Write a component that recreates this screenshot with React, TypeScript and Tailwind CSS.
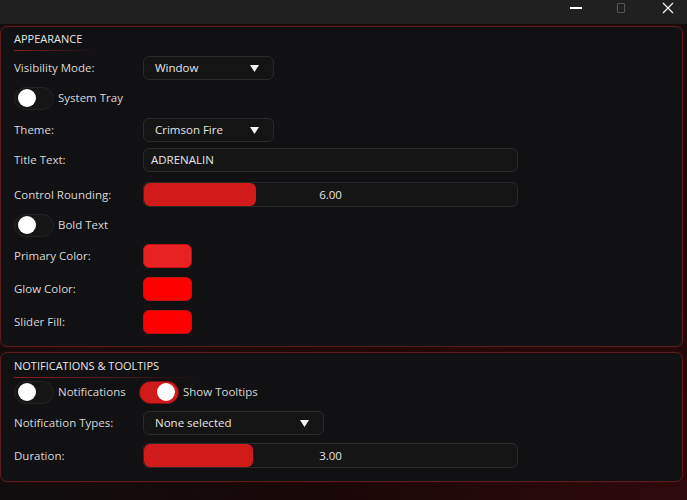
import { ReactNode } from "react";

const font = { fontFamily: '"Open Sans", "Noto Sans", sans-serif' };

const Triangle = () => (
  <svg width="9" height="7" viewBox="0 0 9 7">
    <path d="M0 0 L9 0 L4.5 7 Z" fill="#f2f2f2" />
  </svg>
);

const Label = ({ children }: { children: ReactNode }) => (
  <p className="w-[129px] text-[11.5px] text-[#d8d8d8]">{children}</p>
);

const Dropdown = ({ value, w }: { value: string; w: string }) => (
  <div
    className={`${w} h-[24px] flex items-center justify-between pl-[11px] pr-[14px]
      bg-[#141414] border border-[#2a2a2a] rounded-[6px] text-[11.5px] text-[#e6e6e6]`}
  >
    <span>{value}</span>
    <Triangle />
  </div>
);

const Toggle = ({ on, label }: { on?: boolean; label: string }) => (
  <div className="flex flex-row items-center">
    <div
      className={`w-[40px] h-[23px] rounded-full flex items-center px-[3px] border ${
        on
          ? "bg-[#d11a1a] border-[#7d1212] justify-end"
          : "bg-[#151515] border-[#232323] justify-start"
      }`}
    >
      <div className="w-[18px] h-[18px] rounded-full bg-white" />
    </div>
    <p className="ml-[4px] text-[11.5px] text-[#d8d8d8]">{label}</p>
  </div>
);

const Slider = ({ value, fill }: { value: string; fill: string }) => (
  <div className="relative w-[375px] h-[25px] bg-[#151515] border border-[#2a2a2a] rounded-[6px] flex items-center justify-center">
    <div className={`absolute left-0 top-0 bottom-0 ${fill} bg-[#d11a1a] rounded-[6px]`} />
    <span className="relative text-[11.5px] text-[#e6e6e6]">{value}</span>
  </div>
);

const Swatch = ({ color }: { color: string }) => (
  <div className={`w-[49px] h-[24px] rounded-[6px] border border-[#c01010] ${color}`} />
);

const Heading = ({ title, line }: { title: string; line: string }) => (
  <div className="flex flex-col">
    <p className="text-[11px] text-[#e6e6e6] leading-[14px]">{title}</p>
    <div className={`${line} h-[1px] mt-[4px] bg-gradient-to-r from-[#8a2020] to-transparent`} />
  </div>
);

export default function App() {
  return (
    <div
      style={font}
      className="w-[687px] h-[500px] overflow-hidden flex flex-col
        bg-[radial-gradient(ellipse_at_100%_100%,#300a0a_0%,#1a0707_35%,#0f0d0e_70%)]"
    >
      <div className="h-[24px] shrink-0 bg-[#202020] flex flex-row items-center justify-end">
        <div className="w-[12px] h-[1.5px] bg-white mr-[35px] mb-[8px]" />
        <div className="w-[8px] h-[10px] border border-[#555] rounded-[1px] mr-[37px] mb-[9px]" />
        <svg width="12" height="12" viewBox="0 0 12 12" className="mr-[13px] mb-[8px]">
          <path d="M1 1 L11 11 M11 1 L1 11" stroke="#f0f0f0" strokeWidth="1.3" />
        </svg>
      </div>

      <div className="mt-[2px] mr-[4px] h-[321px] bg-[#111012] border border-[#5c1c1c] rounded-[7px] pl-[13px] pt-[5px] flex flex-col shadow-[0_0_4px_#3a0a0a]">
        <Heading title="APPEARANCE" line="w-[82px]" />
        <div className="flex flex-row items-center h-[24px] mt-[5px]">
          <Label>Visibility Mode:</Label>
          <Dropdown value="Window" w="w-[131px]" />
        </div>
        <div className="flex flex-row items-center h-[24px] mt-[6px]">
          <Toggle label="System Tray" />
        </div>
        <div className="flex flex-row items-center h-[24px] mt-[8px]">
          <Label>Theme:</Label>
          <Dropdown value="Crimson Fire" w="w-[131px]" />
        </div>
        <div className="flex flex-row items-center h-[24px] mt-[6px]">
          <Label>Title Text:</Label>
          <div className="w-[375px] h-[24px] flex items-center pl-[7px] bg-[#151515] border border-[#2a2a2a] rounded-[6px] text-[11.5px] text-[#e6e6e6]">
            ADRENALIN
          </div>
        </div>
        <div className="flex flex-row items-center h-[25px] mt-[10px]">
          <Label>Control Rounding:</Label>
          <Slider value="6.00" fill="w-[112px]" />
        </div>
        <div className="flex flex-row items-center h-[24px] mt-[6px]">
          <Toggle label="Bold Text" />
        </div>
        <div className="flex flex-row items-center h-[24px] mt-[7px]">
          <Label>Primary Color:</Label>
          <Swatch color="bg-[#e82222]" />
        </div>
        <div className="flex flex-row items-center h-[24px] mt-[9px]">
          <Label>Glow Color:</Label>
          <Swatch color="bg-[#ff0000]" />
        </div>
        <div className="flex flex-row items-center h-[24px] mt-[9px]">
          <Label>Slider Fill:</Label>
          <Swatch color="bg-[#ff0000]" />
        </div>
      </div>

      <div className="mt-[5px] mr-[4px] h-[130px] bg-[#111012] border border-[#5c1c1c] rounded-[7px] pl-[13px] pt-[6px] flex flex-col shadow-[0_0_4px_#3a0a0a]">
        <Heading title="NOTIFICATIONS & TOOLTIPS" line="w-[196px]" />
        <div className="flex flex-row items-center h-[24px] mt-[2px]">
          <div className="w-[125px]">
            <Toggle label="Notifications" />
          </div>
          <Toggle on label="Show Tooltips" />
        </div>
        <div className="flex flex-row items-center h-[24px] mt-[7px]">
          <Label>Notification Types:</Label>
          <Dropdown value="None selected" w="w-[181px]" />
        </div>
        <div className="flex flex-row items-center h-[25px] mt-[8px]">
          <Label>Duration:</Label>
          <Slider value="3.00" fill="w-[109px]" />
        </div>
      </div>
    </div>
  );
}
